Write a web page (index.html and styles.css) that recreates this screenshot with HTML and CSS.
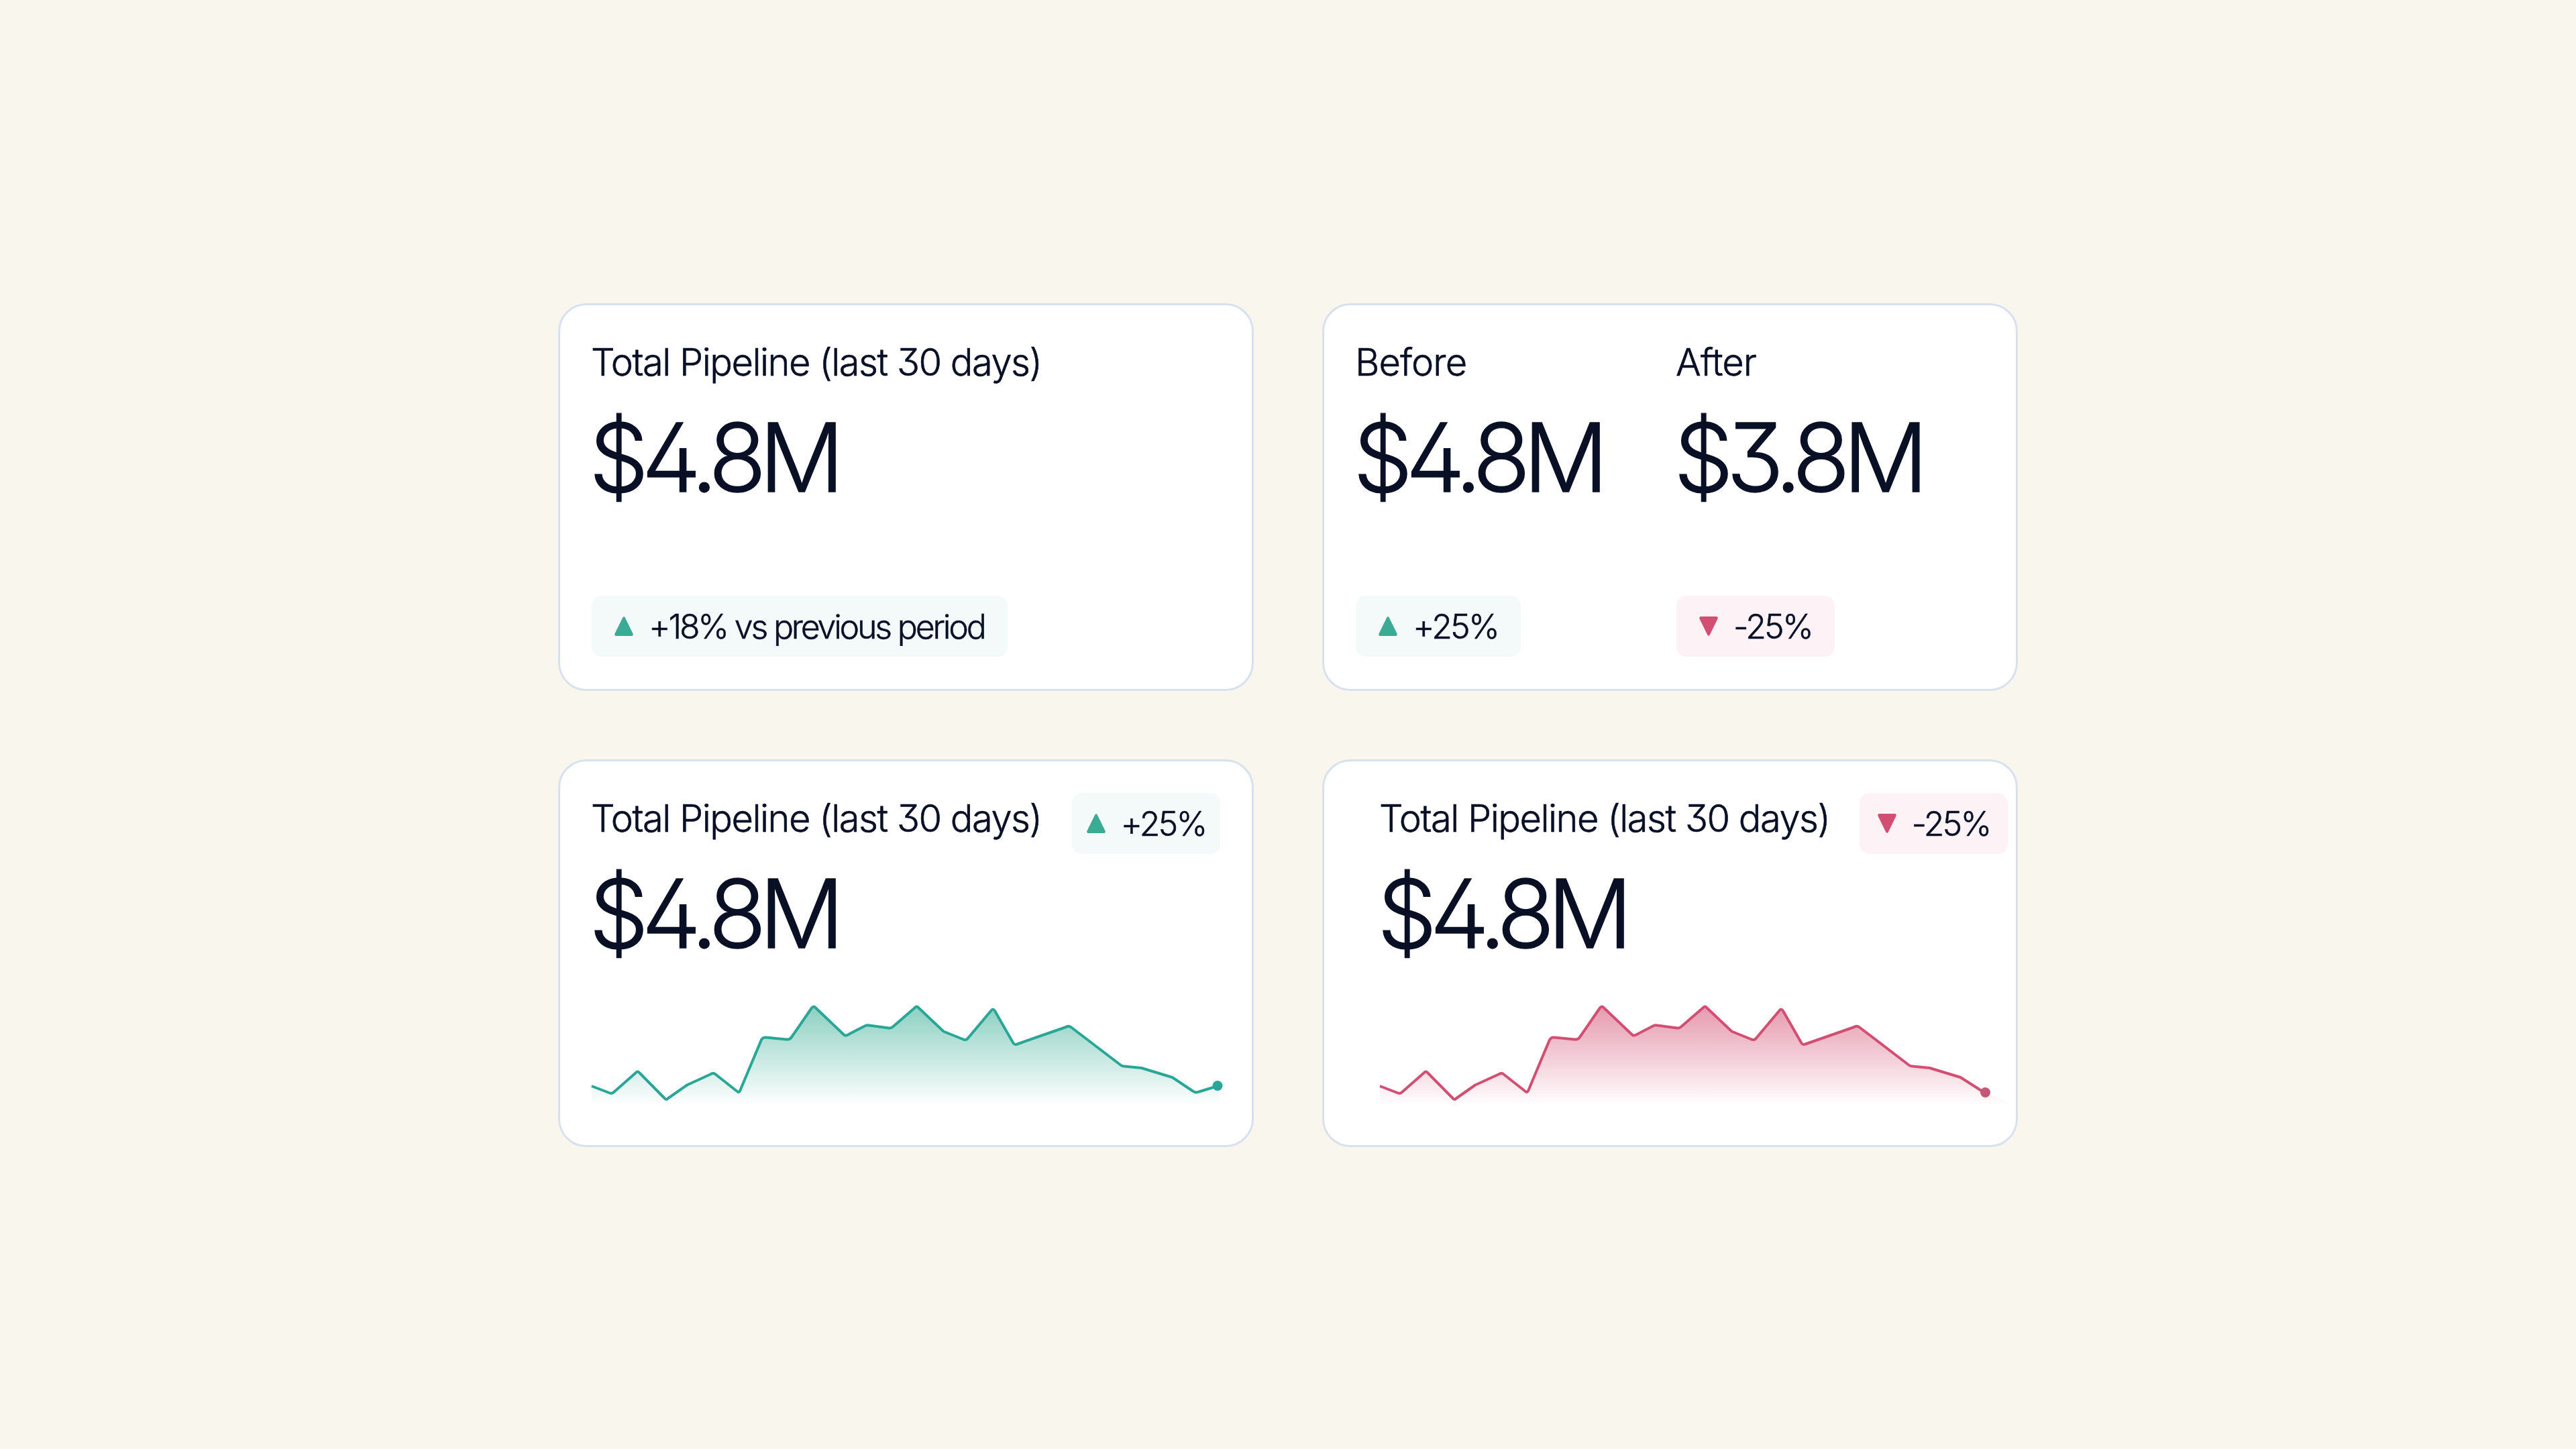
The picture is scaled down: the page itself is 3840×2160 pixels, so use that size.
FILE: index.html
```html
<!DOCTYPE html>
<html lang="en">
<head>
    <meta charset="UTF-8">
    <meta name="viewport" content="width=device-width, initial-scale=1.0">
    <title>Pipeline</title>
    <link rel="stylesheet" href="styles.css">
</head>
<body>
    <main class="cards">
        <!-- Total with period comparison -->
        <section class="card">
            <h3 class="label">Total Pipeline (last 30 days)</h3>
            <p class="value">$4.8M</p>
            <div class="badge up wide">
                <svg class="arrow" viewBox="0 0 28 29"><path d="M12.3 1.6Q14 -1 15.7 1.6L27.5 25.5Q28.5 29 25.5 29H2.5Q-.5 29 .5 25.5Z"/></svg>
                <span>+18% vs previous period</span>
            </div>
        </section>

        <!-- Before / after -->
        <section class="card split">
            <div class="column">
                <h3 class="label short">Before</h3>
                <p class="value">$4.8M</p>
                <div class="badge up">
                    <svg class="arrow" viewBox="0 0 28 29"><path d="M12.3 1.6Q14 -1 15.7 1.6L27.5 25.5Q28.5 29 25.5 29H2.5Q-.5 29 .5 25.5Z"/></svg>
                    <span>+25%</span>
                </div>
            </div>
            <div class="column">
                <h3 class="label short">After</h3>
                <p class="value">$3.8M</p>
                <div class="badge down">
                    <svg class="arrow" viewBox="0 0 28 29"><path d="M12.3 27.4Q14 30 15.7 27.4L27.5 3.5Q28.5 0 25.5 0H2.5Q-.5 0 .5 3.5Z"/></svg>
                    <span>-25%</span>
                </div>
            </div>
        </section>

        <!-- Trend up -->
        <section class="card">
            <div class="top">
                <h3 class="label">Total Pipeline (last 30 days)</h3>
                <div class="badge up small">
                    <svg class="arrow" viewBox="0 0 28 29"><path d="M12.3 1.6Q14 -1 15.7 1.6L27.5 25.5Q28.5 29 25.5 29H2.5Q-.5 29 .5 25.5Z"/></svg>
                    <span>+25%</span>
                </div>
            </div>
            <p class="value">$4.8M</p>
            <svg class="chart" viewBox="0 0 936 170">
                <defs>
                    <linearGradient id="fill-up" gradientUnits="userSpaceOnUse" x1="0" y1="20" x2="0" y2="168">
                        <stop offset="0" stop-color="#28a58a" stop-opacity=".53"/>
                        <stop offset="1" stop-color="#28a58a" stop-opacity="0"/>
                    </linearGradient>
                </defs>
                <path fill="url(#fill-up)" d="M0 139L29 150L68.5 117L111 159L142 137L181 119L219 148.5L254 66L294 69.5L330.5 20L378 64L410.5 48L446 53L484.5 20L526.5 58.5L558 70.5L598 24L630.5 77.5L711 49.5L791 109L819.5 112L865.5 126L901 148.5L935 139V168H0Z"/>
                <path class="line line-up" d="M0 139L26 149Q30 151 33 148L66 119Q68.5 116 71 119L109 157.5Q111 160 113.5 157.5L142 137.5L178 121Q181 119 184 121L217 147Q220 149.5 221.5 145L253 70Q255 66 260 66.5L291 69.5Q295 70 298 66L328 22.5Q330.5 19 333.5 22L375.5 62Q378 64.5 381 63L408 49Q410.5 48 413.5 48.5L443 52.5Q446 53 448.5 51L482 22Q484.5 19 487 22L524.5 57.5L553 69Q558 71.5 561 67.5L595.5 26.5Q598.5 22.5 601 27L628.5 75Q630.5 78 634 76.5L707 51Q711 48.5 715 51.5L789 108Q791 109.5 794 109.5L819.5 112L865.5 126L897 147Q901 149.5 905 147.5L933 139"/>
                <circle cx="933" cy="138.5" r="7.5" fill="#28a799"/>
            </svg>
        </section>

        <!-- Trend down -->
        <section class="card inset">
            <div class="top">
                <h3 class="label">Total Pipeline (last 30 days)</h3>
                <div class="badge down small">
                    <svg class="arrow" viewBox="0 0 28 29"><path d="M12.3 27.4Q14 30 15.7 27.4L27.5 3.5Q28.5 0 25.5 0H2.5Q-.5 0 .5 3.5Z"/></svg>
                    <span>-25%</span>
                </div>
            </div>
            <p class="value">$4.8M</p>
            <svg class="chart" viewBox="0 0 936 170">
                <defs>
                    <linearGradient id="fill-down" gradientUnits="userSpaceOnUse" x1="0" y1="20" x2="0" y2="168">
                        <stop offset="0" stop-color="#d24e72" stop-opacity=".57"/>
                        <stop offset="1" stop-color="#d24e72" stop-opacity="0"/>
                    </linearGradient>
                </defs>
                <path fill="url(#fill-down)" d="M0 139L29 150L68.5 117L111 159L142 137L181 119L219 148.5L254 66L294 69.5L330.5 20L378 64L410.5 48L446 53L484.5 20L526.5 58.5L558 70.5L598 24L630.5 77.5L711 49.5L791 109L819.5 112L865.5 126L901 148.5L936 163V168H0Z"/>
                <path class="line line-down" d="M0 139L26 149Q30 151 33 148L66 119Q68.5 116 71 119L109 157.5Q111 160 113.5 157.5L142 137.5L178 121Q181 119 184 121L217 147Q220 149.5 221.5 145L253 70Q255 66 260 66.5L291 69.5Q295 70 298 66L328 22.5Q330.5 19 333.5 22L375.5 62Q378 64.5 381 63L408 49Q410.5 48 413.5 48.5L443 52.5Q446 53 448.5 51L482 22Q484.5 19 487 22L524.5 57.5L553 69Q558 71.5 561 67.5L595.5 26.5Q598.5 22.5 601 27L628.5 75Q630.5 78 634 76.5L707 51Q711 48.5 715 51.5L789 108Q791 109.5 794 109.5L819.5 112L865.5 126L900 148"/>
                <circle cx="902.5" cy="148.5" r="7.5" fill="#c25878"/>
            </svg>
        </section>
    </main>
</body>
</html>
```
FILE: styles.css
```css
* {
    box-sizing: border-box;
}
body {
    margin: 0;
    min-height: 100vh;
    display: flex;
    align-items: center;
    justify-content: center;
    background-color: #f9f6ee;
    color: #090f24;
    font-family: Inter, "Open Sans", sans-serif;
    font-weight: 300;
    font-feature-settings: "cv02", "cv09";
}
.cards {
    display: grid;
    grid-template-columns: 1037px 1037px;
    grid-auto-rows: 578px;
    gap: 102px;
    margin-top: 2px;
}
.card {
    display: flex;
    flex-direction: column;
    background: white;
    border: 3px solid #d8e1ed;
    border-radius: 42px;
    padding: 47px 47px 48px;
}
.inset {
    padding-left: 83px;
    padding-right: 12px;
}
.split {
    flex-direction: row;
}
.column {
    display: flex;
    flex-direction: column;
    flex: none;
    width: 478px;
}
.top {
    display: flex;
    justify-content: space-between;
    align-items: flex-start;
    height: 68px;
}
.label {
    margin: 8px 0 0 -1px;
    font-size: 56px;
    font-weight: 300;
    line-height: 60px;
    letter-spacing: -1.5px;
    white-space: nowrap;
    -webkit-text-stroke: 0.6px #090f24;
}
.short {
    letter-spacing: -0.9px;
}
.value {
    margin: 42px 0 0 -4px;
    font-size: 141px;
    line-height: 140px;
    letter-spacing: -10.5px;
    -webkit-text-stroke: 1.3px #090f24;
}
.badge {
    display: flex;
    align-items: center;
    align-self: flex-start;
    height: 91px;
    margin-top: auto;
    padding: 0 34px;
    border-radius: 15px;
    font-size: 50px;
    letter-spacing: -2.8px;
    white-space: nowrap;
}
.badge span {
    margin-left: 23px;
    -webkit-text-stroke: 0.5px #090f24;
}
.wide {
    letter-spacing: -3.2px;
}
.small {
    width: 221px;
    margin-top: 0;
    padding: 0;
    justify-content: center;
}
.up {
    background: #f3faf9;
    fill: #3aab94;
}
.down {
    background: #fdf3f6;
    fill: #d24e72;
}
.arrow {
    width: 28px;
    height: 29px;
}
.chart {
    width: 936px;
    height: 170px;
    margin-top: 48px;
    overflow: visible;
}
.line {
    fill: none;
    stroke-width: 4;
    stroke-linejoin: round;
}
.line-up {
    stroke: #28a797;
}
.line-down {
    stroke: #d24e72;
}
```
